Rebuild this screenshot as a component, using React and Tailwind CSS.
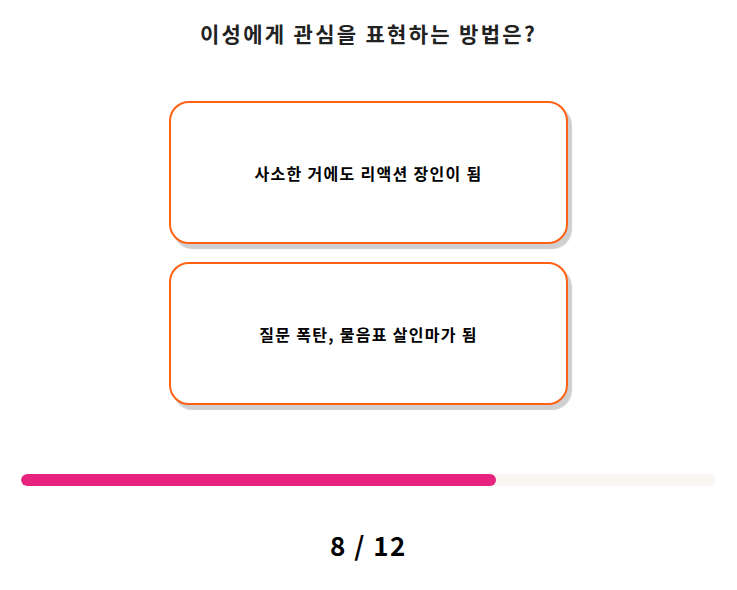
export default function App() {
  const options = ["사소한 거에도 리액션 장인이 됨", "질문 폭탄, 물음표 살인마가 됨"];
  const current = 8;
  const total = 12;
  return (
    <div className="w-[737px] h-[590px] bg-white flex flex-col font-['Noto_Sans_CJK_KR','Noto_Sans',sans-serif]">
      <h1 className="mt-[17px] h-[32px] leading-[32px] text-center text-[21px] tracking-[2.3px] font-bold text-[#222]">
        이성에게 관심을 표현하는 방법은?
      </h1>
      <div className="mt-[52px] flex flex-col gap-[18px] items-center">
        {options.map((o) => (
          <button
            key={o}
            className="w-[399px] h-[143px] rounded-[20px] border-2 border-[#ff6214] bg-white shadow-[4px_5px_1px_#cfcfcf] flex items-center justify-center text-[16px] tracking-[1.3px] font-bold text-black"
          >
            {o}
          </button>
        ))}
      </div>
      <div className="mt-[69px] mx-[21px] h-[12px] rounded-full bg-[#faf6f2] overflow-hidden">
        <div className="h-full w-[68.4%] rounded-full bg-[#e8237f]" />
      </div>
      <div className="mt-[44px] text-center text-[26px] leading-[30px] tracking-[1.5px] font-bold text-black">
        {current} / {total}
      </div>
    </div>
  );
}
